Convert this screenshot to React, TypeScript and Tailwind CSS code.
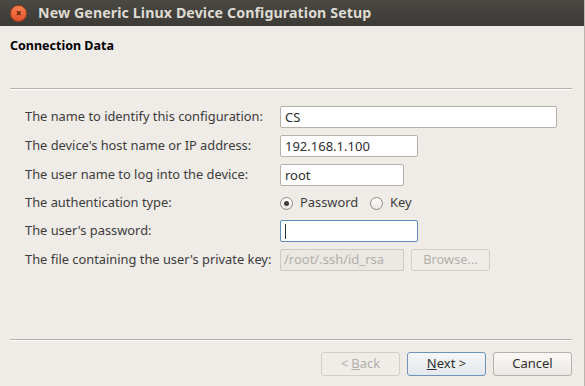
export default function App() {
  const font = { fontFamily: '"Noto Sans", "DejaVu Sans", sans-serif' };
  return (
    <div className="w-[585px] h-[386px] flex flex-col bg-[#efebe7] text-[#3c3c3c] overflow-hidden border-r border-[#b8b4ad]" style={font}>
      {/* Title bar */}
      <div className="h-[26px] shrink-0 flex items-center bg-gradient-to-b from-[#4a4944] to-[#3b3a36] pl-[10px]">
        <div className="w-[17px] h-[17px] rounded-full bg-gradient-to-b from-[#f7814f] to-[#e0512a] border border-[#a83d1d] flex items-center justify-center">
          <span className="text-[#4a1c0c] text-[10px] leading-none font-bold">×</span>
        </div>
        <span className="ml-[11px] text-[14.2px] font-bold text-[#dfdbd2] tracking-[0.1px]">
          New Generic Linux Device Configuration Setup
        </span>
      </div>

      {/* Header */}
      <div className="h-[62px] shrink-0 px-[10px] pt-[11px]">
        <div className="text-[12.5px] font-bold text-black">Connection Data</div>
      </div>
      <div className="mx-[10px] mr-[12px] border-t border-[#b5b1aa] border-b border-b-white" />

      {/* Form */}
      <div className="pl-[25px] pt-[16px] grid grid-cols-[255px_1fr] gap-y-[7px] text-[12.85px] items-center">
        <label>The name to identify this configuration:</label>
        <input readOnly value="CS" className="w-[277px] h-[22px] px-[4px] bg-white border border-[#b5b1aa] rounded-[2px] text-[13px] text-[#2e2e2e] outline-none" />

        <label>The device's host name or IP address:</label>
        <input readOnly value="192.168.1.100" className="w-[138px] h-[22px] px-[4px] bg-white border border-[#b5b1aa] rounded-[2px] text-[13px] text-[#2e2e2e] outline-none" />

        <label>The user name to log into the device:</label>
        <input readOnly value="root" className="w-[124px] h-[22px] px-[4px] bg-white border border-[#b5b1aa] rounded-[2px] text-[13px] text-[#2e2e2e] outline-none" />

        <label className="h-[20px] flex items-center">The authentication type:</label>
        <div className="h-[20px] flex items-center">
          <span className="w-[13px] h-[13px] rounded-full border border-[#8f8b84] bg-gradient-to-b from-white to-[#ebe8e4] flex items-center justify-center">
            <span className="w-[5px] h-[5px] rounded-full bg-[#3c3c3c]" />
          </span>
          <span className="ml-[7px]">Password</span>
          <span className="ml-[12px] w-[13px] h-[13px] rounded-full border border-[#8f8b84] bg-gradient-to-b from-white to-[#ebe8e4]" />
          <span className="ml-[7px]">Key</span>
        </div>

        <label>The user's password:</label>
        <div className="w-[138px] h-[22px] px-[4px] bg-white border border-[#5f8ebc] rounded-[2px] flex items-center">
          <span className="w-px h-[15px] bg-[#2e2e2e]" />
        </div>

        <label>The file containing the user's private key:</label>
        <div className="flex items-center">
          <div className="w-[124px] h-[22px] px-[3px] bg-[#ebe8e4] border border-[#cdc9c3] rounded-[2px] text-[13px] text-[#b3afa9] flex items-center">
            /root/.ssh/id_rsa
          </div>
          <div className="ml-[7px] w-[79px] h-[22px] border border-[#d2cec8] rounded-[3px] bg-[#f0ede9] text-[#b3afa9] flex items-center justify-center">
            Browse...
          </div>
        </div>
      </div>

      <div className="flex-1" />

      {/* Footer */}
      <div className="mx-[10px] mr-[12px] border-t border-[#b5b1aa] border-b border-b-white" />
      <div className="h-[45px] shrink-0 flex items-center justify-end pr-[12px] gap-[7px] text-[13px]">
        <div className="w-[79px] h-[24px] border border-[#d2cec8] rounded-[3px] bg-[#f0ede9] text-[#b3afa9] flex items-center justify-center">
          &lt; <span className="underline ml-[3px]">B</span>ack
        </div>
        <div className="w-[79px] h-[24px] border border-[#6f92b5] rounded-[3px] bg-gradient-to-b from-[#f4f6f8] to-[#e3e8ec] text-[#2e2e2e] flex items-center justify-center">
          <span className="underline">N</span>ext &gt;
        </div>
        <div className="w-[79px] h-[24px] border border-[#b5b1aa] rounded-[3px] bg-gradient-to-b from-[#faf9f8] to-[#ebe8e4] text-[#2e2e2e] flex items-center justify-center">
          Cancel
        </div>
      </div>
    </div>
  );
}
